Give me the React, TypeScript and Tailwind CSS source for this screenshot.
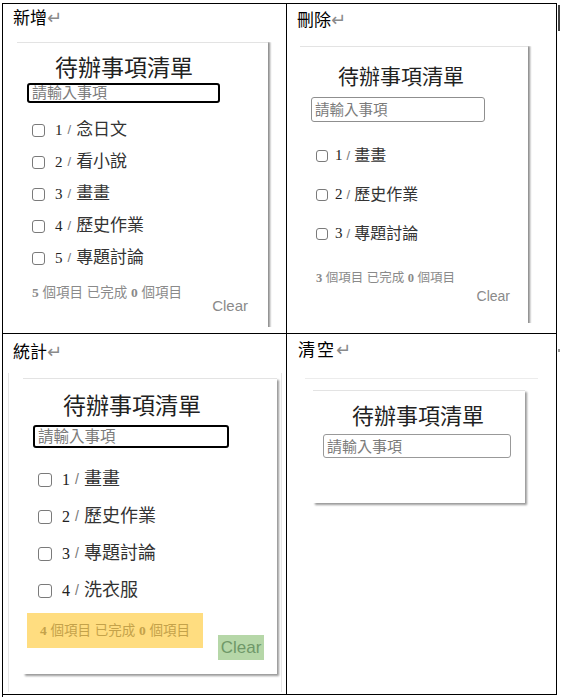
const SANS = "font-['Liberation_Sans','Noto_Sans_CJK_TC',sans-serif]";
const SERIF = "font-['Liberation_Serif','Noto_Sans_CJK_TC',serif]";

type Sizes = {
  row: string;
  box: string;
  num: string;
  slash: string;
  text: string;
};

function Label({ text, className }: { text: string; className: string }) {
  return (
    <div className={`${SANS} text-[17px] leading-[20px] text-black ${className}`}>
      {text}
      <span className="font-['DejaVu_Sans',sans-serif] text-[18px] leading-[20px] tracking-normal text-[#8a8a8a]">↵</span>
    </div>
  );
}

function TodoItems({ items, s }: { items: string[]; s: Sizes }) {
  return (
    <ul>
      {items.map((t, i) => (
        <li key={t} className={`flex items-center ${s.row}`}>
          <span className={`shrink-0 rounded-[3px] border border-[#7a7a7a] bg-white ${s.box}`} />
          <span className={`${SERIF} text-[#222] ${s.num}`}>{i + 1}</span>
          <span className={`${SANS} text-[#777] ${s.slash}`}>/</span>
          <span className={`${SANS} text-[#333] ${s.text}`}>{t}</span>
        </li>
      ))}
    </ul>
  );
}

function Stats({ total, className }: { total: number; className: string }) {
  return (
    <p className={`${SANS} whitespace-nowrap ${className}`}>
      <b className={SERIF}>{total}</b> 個項目 已完成 <b className={SERIF}>0</b> 個項目
    </p>
  );
}

function Title({ className }: { className: string }) {
  return <h1 className={`${SANS} whitespace-nowrap text-[#222] ${className}`}>待辦事項清單</h1>;
}

function Field({ className }: { className: string }) {
  return (
    <input
      readOnly
      placeholder="請輸入事項"
      className={`${SANS} block bg-white pl-[3px] outline-none placeholder:text-[#7b7b7b] ${className}`}
    />
  );
}

export default function App() {
  return (
    <div className="flex min-h-screen bg-white pl-[2px] pt-[3px]">
      <div className="grid w-[555px] grid-cols-[284px_270px] grid-rows-[330px_361px] border-l border-t border-black">
        {/* 新增 */}
        <div className="border-b border-r border-black">
          <Label text="新增" className="pl-[10px] pt-[4px]" />
          <div className="ml-[14px] mt-[13px] h-[285px] w-[256px] overflow-hidden">
            <div className="flex h-[300px] w-[251px] flex-col border-t border-t-[#e3e3e3] bg-white shadow-[2px_0_2px_rgba(0,0,0,0.45)]">
              <Title className="pl-[38px] pt-[11px] text-[23px] leading-[28px]" />
              <Field className="ml-[10px] mt-[1px] h-[20px] w-[193px] rounded-[3px] border-2 border-black text-[15px]" />
              <div className="mt-[11px] pl-[15px]">
                <TodoItems
                  items={["念日文", "看小說", "畫畫", "歷史作業", "專題討論"]}
                  s={{
                    row: "h-[32px]",
                    box: "h-[13px] w-[13px] mr-[10px]",
                    num: "text-[15px]",
                    slash: "mx-[5px] text-[13px]",
                    text: "text-[17px]",
                  }}
                />
              </div>
              <Stats total={5} className="mt-[12px] pl-[15px] text-[13.5px] leading-[14px] text-[#8a8a8a]" />
              <button className={`${SANS} -mt-[2px] self-end pr-[20px] text-[15px] leading-[16px] text-[#8a8a8a]`}>Clear</button>
            </div>
          </div>
        </div>

        {/* 刪除 */}
        <div className="border-b border-r border-black">
          <Label text="刪除" className="pl-[10px] pt-[6px]" />
          <div className="ml-[13px] mt-[15px] h-[277px] w-[233px] overflow-hidden">
            <div className="flex h-[300px] w-[228px] flex-col border-t border-t-[#e3e3e3] bg-white shadow-[2px_0_2px_rgba(0,0,0,0.45)]">
              <Title className="pl-[38px] pt-[17px] text-[21px] leading-[26px]" />
              <Field className="ml-[11px] mt-[7px] h-[25px] w-[174px] rounded-[3px] border border-[#8f8f8f] text-[14.5px]" />
              <div className="mt-[14px] pl-[16px]">
                <TodoItems
                  items={["畫畫", "歷史作業", "專題討論"]}
                  s={{
                    row: "h-[39px]",
                    box: "h-[12px] w-[12px] mr-[7px]",
                    num: "text-[15px]",
                    slash: "mx-[4px] text-[13px]",
                    text: "text-[16px]",
                  }}
                />
              </div>
              <Stats total={3} className="mt-[18px] pl-[16px] text-[12.5px] leading-[14px] text-[#8a8a8a]" />
              <button className={`${SANS} mt-[3px] self-end pr-[18px] text-[14px] leading-[16px] text-[#8a8a8a]`}>Clear</button>
            </div>
          </div>
        </div>

        {/* 統計 */}
        <div className="border-b border-r border-black">
          <Label text="統計" className="pl-[10px] pt-[8px]" />
          <div className="ml-[5px] mt-[10px] h-[319px] w-[274px] border-x border-[#e6e6e6] pl-[14px] pt-[5px]">
            <div className="flex h-[296px] w-[254px] flex-col border-t border-t-[#e3e3e3] bg-white shadow-[2px_2px_2px_rgba(0,0,0,0.4)]">
              <Title className="pl-[40px] pt-[13px] text-[23px] leading-[28px]" />
              <Field className="ml-[10px] mt-[5px] h-[23px] w-[196px] rounded-[3px] border-2 border-black text-[15.5px]" />
              <div className="mt-[13px] pl-[15px]">
                <TodoItems
                  items={["畫畫", "歷史作業", "專題討論", "洗衣服"]}
                  s={{
                    row: "h-[37px]",
                    box: "h-[14px] w-[14px] mr-[10px]",
                    num: "text-[16px]",
                    slash: "mx-[5px] text-[14px]",
                    text: "text-[18px]",
                  }}
                />
              </div>
              <div className="mt-[4px] flex items-start">
                <div className="ml-[4px] flex h-[35px] w-[176px] items-center bg-[#ffdd80] pl-[13px]">
                  <Stats total={4} className="text-[13.5px] leading-[14px] text-[#c4a24a]" />
                </div>
                <button className={`${SANS} ml-[15px] mt-[22px] h-[25px] w-[46px] bg-[#b6d7a8] text-[17px] leading-[25px] text-[#6f9868]`}>
                  Clear
                </button>
              </div>
            </div>
          </div>
        </div>

        {/* 清空 */}
        <div className="border-b border-r border-black">
          <Label text="清空" className="pl-[11px] pt-[6px] tracking-[2px]" />
          <div className="ml-[18px] mt-[17px] w-[233px] border-t border-[#ececec] pl-[8px] pt-[11px]">
            <div className="h-[113px] w-[212px] border-t border-t-[#e3e3e3] bg-white shadow-[2px_2px_2px_rgba(0,0,0,0.4)]">
              <Title className="pl-[39px] pt-[13px] text-[22px] leading-[26px]" />
              <Field className="ml-[10px] mt-[4px] h-[24px] w-[188px] rounded-[3px] border border-[#999] text-[15px]" />
            </div>
          </div>
        </div>
      </div>

      <div className="ml-[1px] flex flex-col">
        <div className="mt-[2px] h-[26px] w-[2px] bg-[#444]" />
        <div className="mt-[318px] h-[3px] w-[2px] bg-[#999]" />
      </div>
    </div>
  );
}
